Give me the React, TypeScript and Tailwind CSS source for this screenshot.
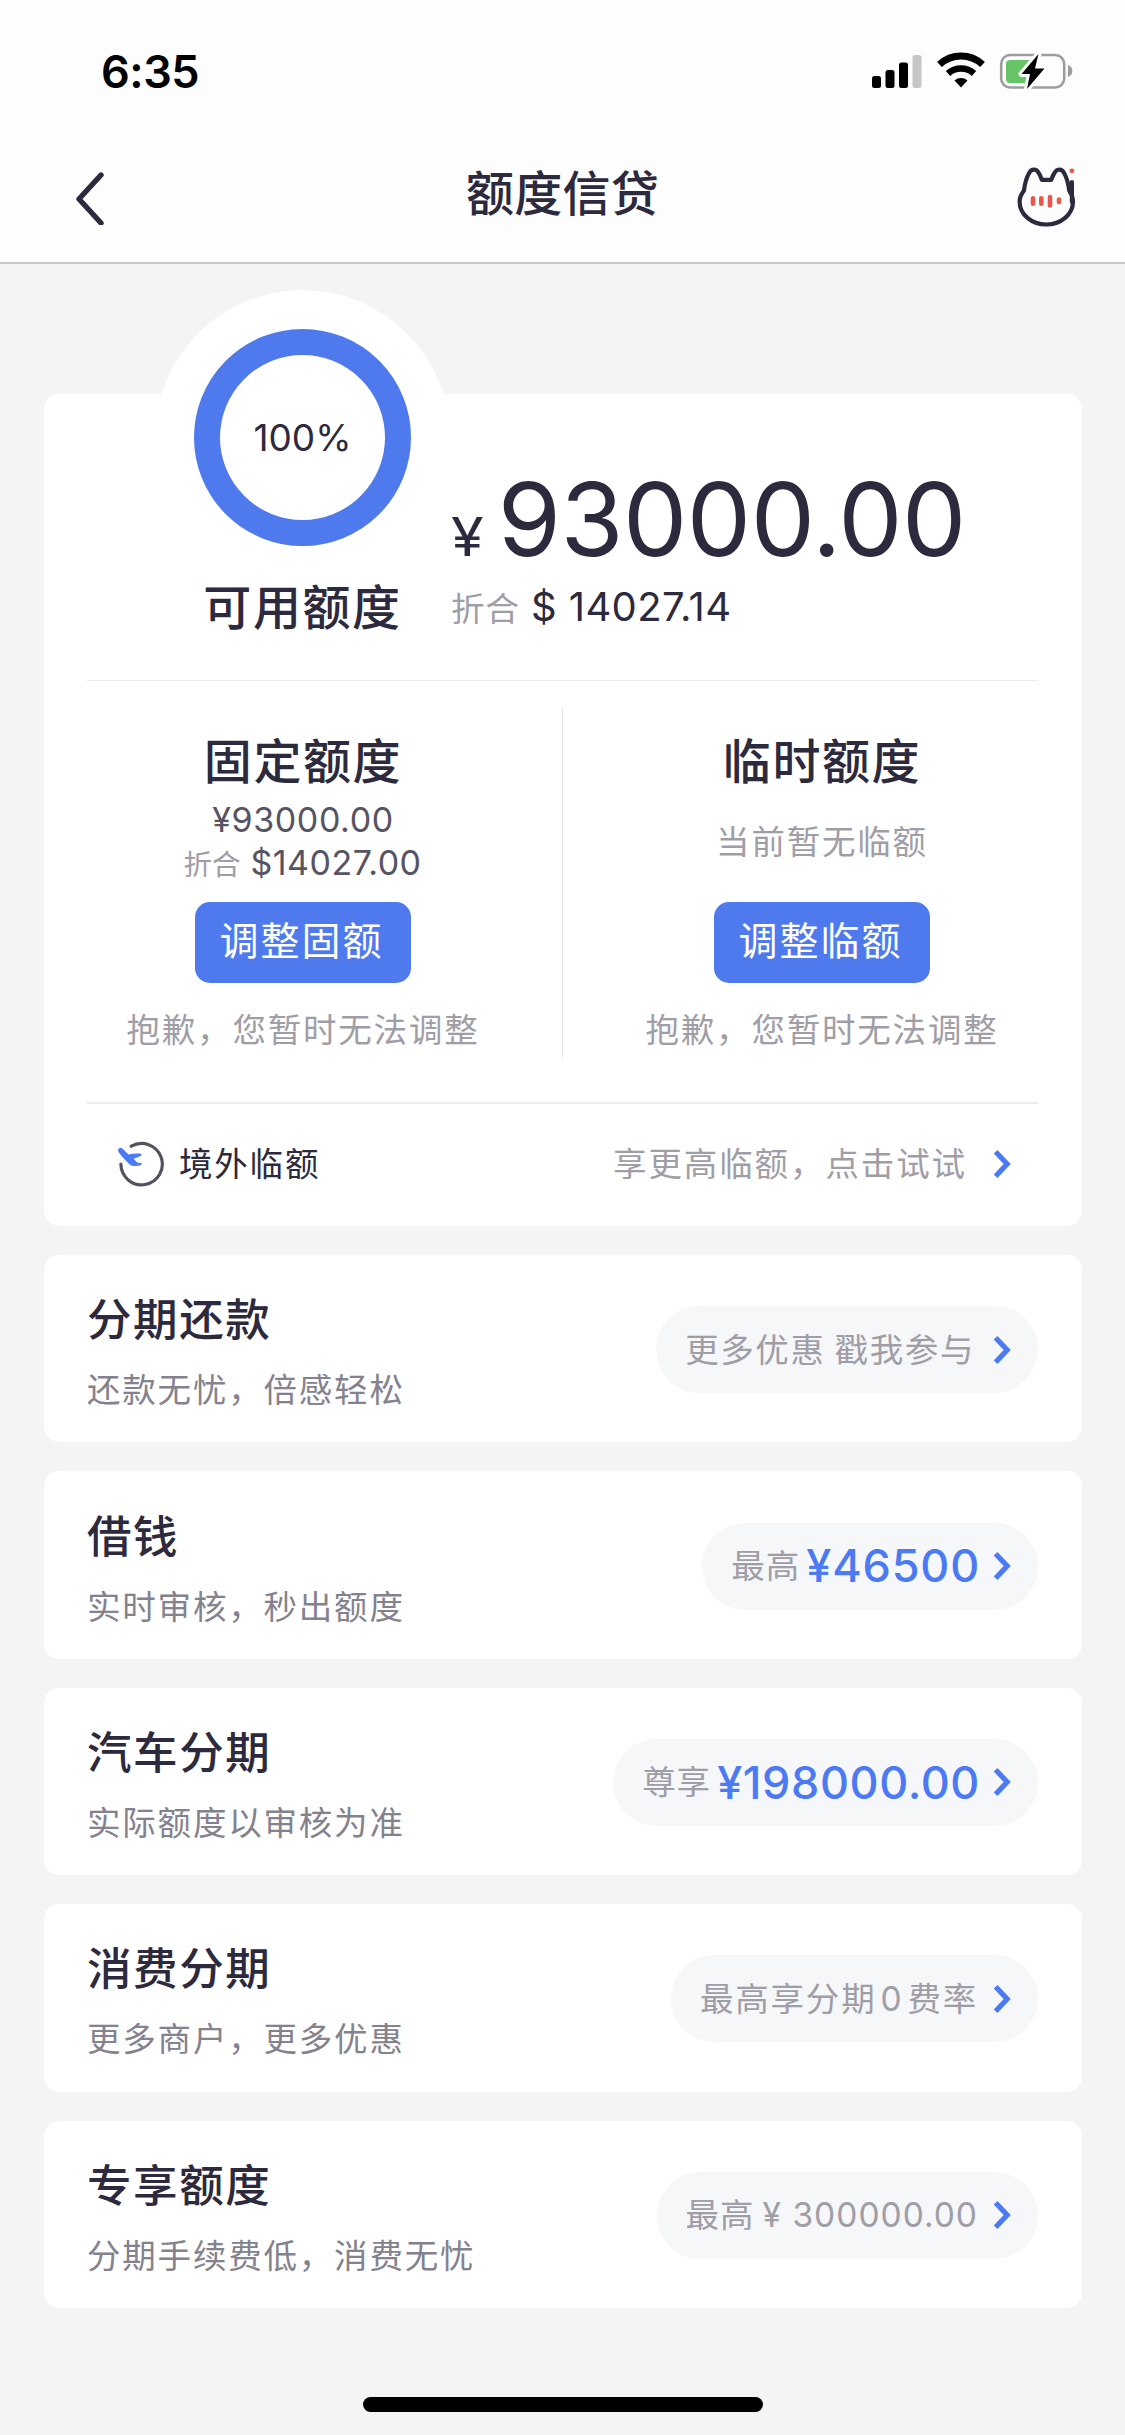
import type { ReactNode } from "react";

function StatusIcons() {
  return (
    <svg className="block h-[40px] w-[204px]" viewBox="0 0 204 40" fill="none">
      <rect x="2" y="26" width="9" height="12" rx="2.5" fill="#000" />
      <rect x="15.5" y="20" width="9" height="18" rx="2.5" fill="#000" />
      <rect x="29" y="12.5" width="9" height="25.5" rx="2.5" fill="#000" />
      <rect x="42.5" y="5" width="9" height="33" rx="2.5" fill="#c6c6c6" />
      <path d="M69.5 14.5a31.5 31.5 0 0 1 43 0" stroke="#000" strokeWidth="7" />
      <path d="M78 23.5a19.5 19.5 0 0 1 26 0" stroke="#000" strokeWidth="6.5" />
      <path d="M84.5 30.5a10 10 0 0 1 13 0L91 37.5Z" fill="#000" />
      <rect x="131.2" y="5" width="63" height="32.5" rx="9" stroke="#9d9d9d" strokeWidth="2.6" />
      <path d="M198 15v12c3-1 4.3-3.2 4.3-6s-1.3-5-4.3-6Z" fill="#9d9d9d" />
      <path d="M140 10h20v23h-20a4 4 0 0 1-4-4v-15a4 4 0 0 1 4-4Z" fill="#65c466" />
      <path
        d="M168.500 4 151.500 24h8.500l-3 15 17.500-20.500h-9.500l3.500-14.500Z"
        fill="#000"
        stroke="#fff"
        strokeWidth="6"
        strokeLinejoin="round"
        paintOrder="stroke"
      />
    </svg>
  );
}

function CatIcon() {
  return (
    <svg className="block h-[66px] w-[66px]" viewBox="0 0 66 66" fill="none">
      <path
        d="M58.900 18v20M60 37.500c0 13-12 23-26.700 23s-26.700-10-26.700-23c0-4.500 1.800-7.500 4.400-11 .7-6.500 2.800-13.500 5.400-18 2.200-3.600 6.400-3.800 8.700-.6 1.700 2.300 2.800 4.800 3.800 7.900h9.400c1-3.100 2.100-5.600 3.800-7.900 2.300-3.200 6.500-3 8.700.6 2.700 4.500 4.600 11.500 5.400 18 2.300 3.400 3.800 6.500 3.800 11Z"
        stroke="#2d2a3d"
        strokeWidth="4.200"
        strokeLinecap="round"
        strokeLinejoin="round"
      />
      <circle cx="58.900" cy="6.800" r="2.400" fill="#e8574b" />
      <path d="M20 34.300v5.500M28.300 34.300v5.500M37 33v8.500M46 35.500v2.500" stroke="#e8574b" strokeWidth="4.600" strokeLinecap="round" />
    </svg>
  );
}

function PlaneIcon() {
  return (
    <svg className="block h-[48px] w-[48px]" viewBox="0 0 48 48" fill="none">
      <path d="M15.200 6.200A20.700 20.700 0 1 1 4.900 24" stroke="#55525f" strokeWidth="3.200" strokeLinecap="round" />
      <path
        d="M2.100 10.200c0-2.300 2.600-3.200 4.300-1.700l6.200 5.900c3.800-.8 8-1.200 11.600-.8 1.700.3 1.700 1.900.3 2.500-2 1-4.300 1.900-6.800 2.600 1.400 2 3 3.300 4.800 4.200l2.200-.1c1.400.2 1.300 1.600.2 2.100-3.300 1.400-8.200 1.800-11.200-.4C9.500 21 5.800 16.500 2.900 12.600c-.5-.7-.8-1.600-.8-2.400Z"
        fill="#4d7bf3"
      />
    </svg>
  );
}

function Chevron() {
  return (
    <svg className="block h-[30px] w-[20px] shrink-0" viewBox="0 0 20 30" fill="none">
      <path d="M3.600 2.800 15.200 15 3.600 27.200" stroke="#4c7af2" strokeWidth="5.200" />
    </svg>
  );
}

function QuotaColumn({ title, action, children }: { title: string; action: string; children: ReactNode }) {
  return (
    <section className="flex w-[518px] flex-col items-center pt-[56px]">
      <h2 className="text-[48px] font-medium leading-[50px] tracking-[1.6px]">{title}</h2>
      <div className="flex h-[115px] flex-col items-center justify-center pb-[5px]">{children}</div>
      <button className="h-[81px] w-[216px] rounded-[15px] bg-[#4f7aed] pb-[3px] pr-[3px] text-[39px] leading-[78px] tracking-[2px] text-white">
        {action}
      </button>
      <p className="mt-[29px] text-[33.5px] leading-[36px] tracking-[1.8px] text-[#9f9ea7]">
        抱歉，您暂时无法调整
      </p>
    </section>
  );
}

function ProductCard({ title, note, children }: { title: string; note: string; children: ReactNode }) {
  return (
    <article className="flex h-[187.4px] items-center justify-between rounded-[15px] bg-white px-[43.5px]">
      <div className="pt-[6px]">
        <h2 className="text-[44.5px] font-medium leading-[50px] tracking-[1.6px]">{title}</h2>
        <p className="mt-[27px] text-[33.5px] leading-[36px] tracking-[1.8px] text-[#83828e]">{note}</p>
      </div>
      <div className="mt-[2px] flex h-[87px] items-center rounded-full bg-[#f6f7f9] pl-[29px] pr-[26px] text-[33.5px] tracking-[1.8px] text-[#9f9ea7]">
        {children}
        <Chevron />
      </div>
    </article>
  );
}

export default function App() {
  return (
    <div className="flex h-[2435px] w-[1125px] flex-col whitespace-nowrap bg-[#f4f4f4] font-['Inter','Noto_Sans_CJK_SC',sans-serif] text-[#2d2a3d]">
      <header className="flex h-[264px] flex-col border-b-2 border-[#c6c7c7] bg-[#fdfdfe]">
        <div className="flex h-[132px] items-center justify-between pl-[101px] pr-[51px] pt-[8px]">
          <span className="pt-[4px] text-[45px] font-semibold leading-[50px] tracking-[-0.5px] text-black">6:35</span>
          <StatusIcons />
        </div>
        <div className="flex h-[130px] items-center justify-between pl-[72px] pr-[46px]">
          <svg className="mt-[2px] block h-[54px] w-[40px]" viewBox="0 0 40 54" fill="none">
            <path d="M29 4 7 28l22 24" stroke="#2d2a3d" strokeWidth="5.400" strokeLinecap="round" strokeLinejoin="round" />
          </svg>
          <h1 className="-mt-[6px] text-[48px] font-medium leading-[50px] tracking-[0.3px]">额度信贷</h1>
          <CatIcon />
        </div>
      </header>

      <main className="flex flex-col gap-[29px] px-[43.5px] pt-[130px]">
        <section className="h-[832px] rounded-[15px] bg-white px-[0.5px]">
          <div className="flex h-[286px]">
            <div className="relative ml-[150px] flex w-[217px] flex-col items-center">
              <div className="absolute -left-[39px] -top-[104px] h-[295px] w-[295px] rounded-full bg-white" />
              <div className="relative -mt-[65px] flex h-[217px] w-[217px] shrink-0 items-center justify-center rounded-full border-[26.5px] border-[#4f7aed] text-[37px]">
                100%
              </div>
              <h2 className="relative mt-[37px] text-[48px] font-medium leading-[50px] tracking-[1.6px]">可用额度</h2>
            </div>
            <div className="ml-[40px] pt-[73px]">
              <div className="flex h-[104px] items-baseline leading-[104px]">
                <span className="origin-left scale-x-110 text-[54px]">¥</span>
                <span className="ml-[17px] text-[102px] tracking-[-0.5px]">93000.00</span>
              </div>
              <div className="mt-[16px] flex h-[40px] items-baseline leading-[40px]">
                <span className="text-[33.5px] tracking-[1px] text-[#9f9ea7]">折合</span>
                <span className="ml-[11px] text-[40px] tracking-[0.4px]">$ 14027.14</span>
              </div>
            </div>
          </div>

          <div className="mx-[43px] h-px bg-[#ececee]" />

          <div className="flex h-[421px]">
            <QuotaColumn title="固定额度" action="调整固额">
              <span className="text-[34px] leading-[28px] tracking-[0.6px] text-[#565463]">¥93000.00</span>
              <span className="mt-[15px] flex items-baseline leading-[28px]">
                <span className="text-[28.5px] text-[#9f9ea7]">折合</span>
                <span className="ml-[10px] mr-[1px] text-[34px] tracking-[0.5px] text-[#565463]">$14027.00</span>
              </span>
            </QuotaColumn>
            <div className="mt-[26px] h-[351px] w-px bg-[#e6e6ea]" />
            <QuotaColumn title="临时额度" action="调整临额">
              <span className="text-[33.5px] leading-[36px] tracking-[1.8px] text-[#9f9ea7]">当前暂无临额</span>
            </QuotaColumn>
          </div>

          <div className="mx-[43px] h-[2px] bg-[#ececee]" />

          <div className="flex h-[120px] items-center pl-[72px] pr-[69px]">
            <PlaneIcon />
            <span className="ml-[15px] flex-1 text-[33.5px] leading-[36px] tracking-[1.8px]">境外临额</span>
            <span className="mr-[25px] text-[33.5px] leading-[36px] tracking-[1.9px] text-[#9f9ea7]">
              享更高临额，点击试试
            </span>
            <Chevron />
          </div>
        </section>

        <ProductCard title="分期还款" note="还款无忧，倍感轻松">
          <span className="mr-[17px] tracking-[1.6px] [word-spacing:-2px]">更多优惠 戳我参与</span>
        </ProductCard>
        <ProductCard title="借钱" note="实时审核，秒出额度">
          <span className="tracking-[1px]">最高</span>
          <span className="ml-[6px] mr-[12px] text-[45px] font-medium tracking-[0.8px] text-[#4c7af2]">¥46500</span>
        </ProductCard>
        <ProductCard title="汽车分期" note="实际额度以审核为准">
          <span className="tracking-[1px]">尊享</span>
          <span className="ml-[6px] mr-[12px] text-[45px] font-medium tracking-[0.6px] text-[#4c7af2]">¥198000.00</span>
        </ProductCard>
        <ProductCard title="消费分期" note="更多商户，更多优惠">
          <span>最高享分期</span>
          <span className="mx-[4px]">0</span>
          <span className="mr-[14px]">费率</span>
        </ProductCard>
        <ProductCard title="专享额度" note="分期手续费低，消费无忧">
          <span className="mr-[14px]">
            <span className="tracking-[1px]">最高</span>
            <span className="ml-[8px] tracking-[1px]">¥ 300000.00</span>
          </span>
        </ProductCard>
      </main>

      <div className="mb-[23px] ml-[363px] mt-auto h-[15px] w-[400px] rounded-full bg-black" />
    </div>
  );
}
